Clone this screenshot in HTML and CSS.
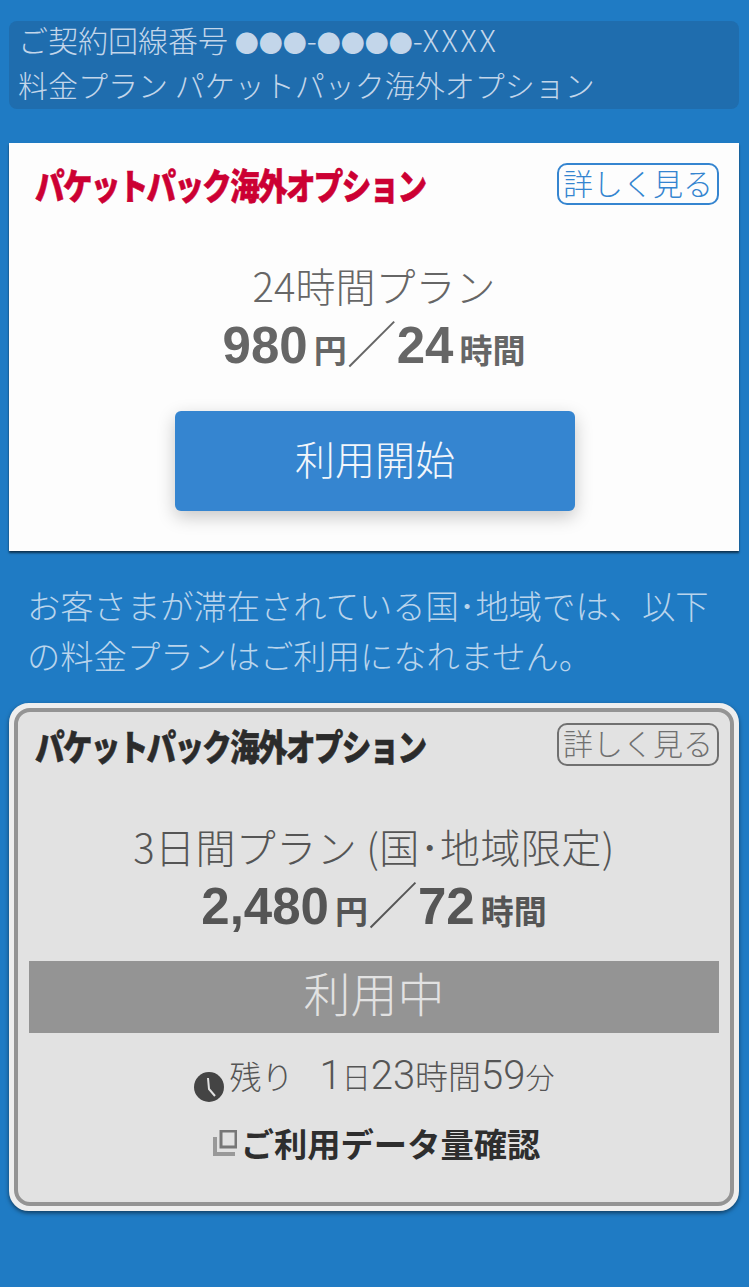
FILE: index.html
```html
<!DOCTYPE html>
<html lang="ja">
<head>
    <meta charset="UTF-8">
    <meta name="viewport" content="width=device-width, initial-scale=1.0">
    <title>パケットパック海外オプション</title>
    <link rel="stylesheet" href="styles.css">
</head>
<body>
    <div class="contract">
        <p>ご契約回線番号 <span class="dots">●●●</span>-<span class="dots">●●●●</span>-<span class="mask">XXXX</span></p>
        <p>料金プラン パケットパック海外オプション</p>
    </div>

    <div class="plan">
        <div class="plan-head">
            <div class="logo logo-red">パケットパック海外オプション</div>
            <a class="more">詳しく見る</a>
        </div>
        <div class="plan-name">24時間プラン</div>
        <div class="price"><b>980</b><strong>円</strong><span class="slash">／</span><b>24</b><strong>時間</strong></div>
        <button class="start">利用開始</button>
    </div>

    <p class="notice">お客さまが滞在されている国･地域では、以下の料金プランはご利用になれません。</p>

    <div class="plan plan-used">
        <div class="plan-inner">
            <div class="plan-head">
                <div class="logo">パケットパック海外オプション</div>
                <a class="more">詳しく見る</a>
            </div>
            <div class="plan-name">3日間プラン (国･地域限定)</div>
            <div class="price"><b>2,480</b><strong>円</strong><span class="slash">／</span><b>72</b><strong>時間</strong></div>
            <div class="status">利用中</div>
            <div class="remain">
                <svg class="clock" width="30" height="30" viewBox="0 0 30 30"><circle cx="15" cy="15" r="15" fill="#444"/><path d="M14 6l1 11 6 7" fill="none" stroke="#e2e2e2" stroke-width="2"/></svg>
                <span>残り</span>
                <span class="remain-time"><span class="num">1</span><small>日</small><span class="num">23</span>時間<span class="num">59</span><small>分</small></span>
            </div>
            <div class="data-link">
                <svg width="24" height="26" viewBox="0 0 24 26"><path d="M8 1h15v16H8z" fill="none" stroke="#777" stroke-width="3"/><path d="M2 7v17h20" fill="none" stroke="#999" stroke-width="4"/></svg>
                <span>ご利用データ量確認</span>
            </div>
        </div>
    </div>
</body>
</html>
```

FILE: styles.css
```css
* {
    margin: 0;
    padding: 0;
    box-sizing: border-box;
}

body {
    font-family: "Noto Sans CJK JP", "Noto Sans", sans-serif;
    font-weight: 300;
    background: #1f7bc4;
    min-height: 1287px;
    padding: 21px 10px 0 9px;
    color: #666;
}

.contract {
    height: 88px;
    padding: 1px 0 0 9px;
    background: #1f6dae;
    border-radius: 8px;
    color: #c3d6ea;
    font-size: 30px;
    line-height: 34px;
}

.contract p {
    margin-bottom: 8px;
}

.dots {
    font-size: 24px;
}

.mask {
    letter-spacing: 2.7px;
}

.plan {
    height: 408px;
    margin-top: 34px;
    padding: 20px 20px 0 26px;
    background: #fdfdfd;
    box-shadow: 0 2px 2px rgba(0,0,0,0.6);
    text-align: center;
}

.plan-head {
    display: flex;
    justify-content: space-between;
    align-items: center;
    height: 42px;
}

.logo {
    width: 391px;
    color: #2b2b2b;
    font-size: 36px;
    font-weight: 900;
    letter-spacing: -2px;
    white-space: nowrap;
    text-align: left;
    transform: scaleX(0.82);
    transform-origin: left center;
    -webkit-text-stroke: 0.6px currentColor;
}

.logo-red {
    color: #cc0033;
}

.more {
    width: 162px;
    height: 42px;
    border: 2px solid #3585d0;
    border-radius: 10px;
    color: #3585d0;
    font-size: 30px;
    line-height: 34px;
    white-space: nowrap;
}

.plan-name {
    margin-top: 57px;
    margin-bottom: 3px;
    margin-left: -6px;
    font-size: 40px;
    line-height: 46px;
    white-space: nowrap;
}

.price {
    height: 70px;
    margin-left: -6px;
    padding-top: 4px;
    font-size: 33px;
    line-height: 62px;
    white-space: nowrap;
}

.price b {
    font-family: "Liberation Sans", sans-serif;
    font-size: 51px;
    font-weight: 700;
}

.price strong {
    margin-left: 6px;
    font-weight: 700;
}

.slash {
    display: inline-block;
    font-size: 50px;
    line-height: 1;
}

.start {
    display: block;
    width: 400px;
    height: 100px;
    margin: 30px 0 0 140px;
    padding-bottom: 6px;
    border: none;
    border-radius: 6px;
    background: #3585d0;
    box-shadow: 0 6px 18px rgba(0,0,0,0.22);
    color: #f2f6fb;
    font-family: inherit;
    font-size: 40px;
    font-weight: 300;
}

.notice {
    margin-top: 29px;
    padding: 0 16px 0 18px;
    color: #b9d4ec;
    font-size: 33.3px;
    line-height: 50px;
}

.plan-used {
    height: 508px;
    margin-top: 23px;
    padding: 0;
    border: 5px solid #eeeeee;
    border-radius: 20px;
    background: #eee;
    box-shadow: 0 2px 4px rgba(0,0,0,0.5);
    color: #555;
}

.plan-inner {
    height: 498px;
    padding: 11px 11px 0 11px;
    border: 4px solid #949494;
    border-radius: 16px;
    background: #e2e2e2;
}

.plan-used .plan-head {
    height: 43px;
}

.plan-used .plan-name {
    margin-left: 0;
    letter-spacing: 0.4px;
}

.plan-used .price {
    margin-left: 0;
}

.plan-used .more {
    height: 43px;
    border-color: #707070;
    color: #707070;
}

.plan-used .logo {
    margin-left: 6px;
}

.status {
    height: 72px;
    margin-top: 19px;
    background: #949494;
    color: #e2e2e2;
    font-size: 47px;
    line-height: 62px;
}

.remain {
    display: flex;
    justify-content: center;
    align-items: center;
    height: 44px;
    margin-top: 20px;
    font-size: 32px;
}

.clock {
    margin: 24px 6px 0 0;
}

.remain-time {
    margin-left: 26px;
    font-size: 33px;
}

.remain-time small {
    font-size: 29px;
}

.num {
    font-family: Roboto, sans-serif;
    font-size: 40px;
    font-weight: 300;
}

.data-link {
    display: flex;
    justify-content: center;
    align-items: center;
    gap: 4px;
    margin-top: 23px;
    margin-left: 5px;
    color: #2e2e2e;
    font-size: 33.3px;
    font-weight: 700;
    line-height: 46px;
}
```
